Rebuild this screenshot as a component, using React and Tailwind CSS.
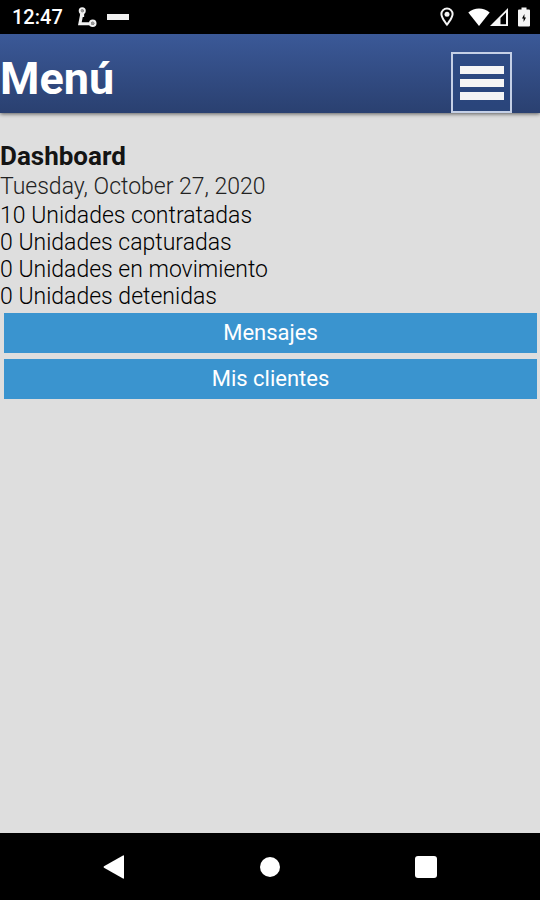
import React from "react";

const stats = [
  { count: 10, label: "Unidades contratadas" },
  { count: 0, label: "Unidades capturadas" },
  { count: 0, label: "Unidades en movimiento" },
  { count: 0, label: "Unidades detenidas" }
];

const actions = ["Mensajes", "Mis clientes"];

const RouteIcon = () => (
  <svg viewBox="0 0 20 21" className="w-5 h-5" fill="none" stroke="#f1f1f1" aria-hidden="true">
    <circle cx="5" cy="4" r="2.6" strokeWidth="2.2" />
    <circle cx="16" cy="17" r="2.8" strokeWidth="2.4" />
    <circle cx="5" cy="4" r="1.6" fill="#999" stroke="none" />
    <circle cx="16" cy="17" r="1.8" fill="#999" stroke="none" />
    <path d="M4.600 7L2.500 17.600H13M7 9H2.600" strokeWidth="3.2" />
  </svg>
);

const PinIcon = () => (
  <svg viewBox="0 0 14 20" className="w-3.5 h-5" aria-hidden="true">
    <path
      fill="#f5f5f5"
      fillRule="evenodd"
      d="M7 0.500a6.600 6.600 0 0 0-6.600 6.600c0 4.600 6.600 12.200 6.600 12.200S13.600 11.700 13.600 7.100A6.600 6.600 0 0 0 7 0.500zM7 2.500A4.600 4.600 0 0 1 11.600 7.100C11.600 9.600 8.800 13.600 7 16 5.200 13.600 2.400 9.600 2.400 7.100A4.600 4.600 0 0 1 7 2.500z"
    />
    <circle cx="7" cy="7.200" r="2.500" fill="#f5f5f5" />
  </svg>
);

const WifiIcon = () => (
  <svg viewBox="0 0 22 18" className="w-[22px] h-[18px]" fill="#fff" aria-hidden="true">
    <path d="M0.300 4.600C6.400-1 15.600-1 21.700 4.600L11 18z" />
  </svg>
);

const SignalIcon = () => (
  <svg viewBox="0 0 18 18" className="w-[18px] h-[18px]" aria-hidden="true">
    <path fill="#f5f5f5" fillRule="evenodd" d="M0 18L18 0V18zM10.500 16.200H16V4.600L10.500 10z" />
  </svg>
);

const BatteryIcon = () => (
  <svg viewBox="0 0 12 20" className="w-3 h-5" aria-hidden="true">
    <path fill="#f5f5f5" d="M3.500 0.500H8.500V2.500H11Q12 2.500 12 3.500V18.500Q12 19.500 11 19.500H1Q0 19.500 0 18.500V3.500Q0 2.500 1 2.500H3.500z" />
    <path fill="#000" d="M6.400 7L4 11.400H5.600V15L8 10.600H6.400z" />
  </svg>
);

const StatusBar = () => (
  <div className="flex h-[34px] items-center bg-black pl-3 pr-2.5 text-white">
    <span className="text-[20px] leading-6 font-medium">12:47</span>
    <span className="ml-3.5">
      <RouteIcon />
    </span>
    <span className="ml-2.5 h-1.5 w-[22px] bg-[#f1f1f1]" />
    <div className="ml-auto flex items-center">
      <PinIcon />
      <span className="ml-3.5">
        <WifiIcon />
      </span>
      <SignalIcon />
      <span className="ml-2.5">
        <BatteryIcon />
      </span>
    </div>
  </div>
);

const Header = () => (
  <header className="flex h-[79px] items-end justify-between bg-linear-to-b from-[#3b5998] to-[#2a4070] pr-7 shadow-[0_1px_4px_rgba(0,0,0,0.6)]">
    <h1 className="pb-1.5 text-[45px] leading-14 font-bold text-white">Menú</h1>
    <button
      type="button"
      aria-label="Abrir menú"
      className="flex size-[61px] flex-col items-center justify-center gap-[5px] border-2 border-[#c5d0e6] bg-[#294780]/60"
    >
      <span className="h-2 w-11 bg-[#f5f5f5]" />
      <span className="h-2 w-11 bg-[#f5f5f5]" />
      <span className="h-2 w-11 bg-[#f5f5f5]" />
    </button>
  </header>
);

const NavBar = () => (
  <nav className="grid h-[67px] grid-cols-3 place-items-center bg-black px-9">
    <button type="button" aria-label="Atrás">
      <svg viewBox="0 0 22 24" className="w-[22px] h-6" fill="#fff" aria-hidden="true">
        <path d="M1 11.200L20 0.500Q21 0 21 1V23Q21 24 20 23.500L1 12.800Q0 12 1 11.200z" />
      </svg>
    </button>
    <button type="button" aria-label="Inicio" className="size-5 rounded-full bg-white" />
    <button type="button" aria-label="Recientes" className="size-[22px] rounded-[3px] bg-white" />
  </nav>
);

export default function App() {
  return (
    <div className="flex min-h-screen flex-col bg-[#dedede] font-['Roboto',sans-serif]">
      <StatusBar />
      <Header />
      <main className="flex-1 pt-[27px] text-black">
        <h2 className="text-[26px] leading-8 font-bold text-[#141414]">Dashboard</h2>
        <p className="text-[23px] leading-[30px] font-light text-[#222]">Tuesday, October 27, 2020</p>
        <ul>
          {stats.map((stat) => (
            <li key={stat.label} className="text-[23px] leading-[27px] font-light">
              {stat.count} {stat.label}
            </li>
          ))}
        </ul>
        <div className="mt-[3px] flex flex-col gap-1.5 pl-1 pr-[3px]">
          {actions.map((action) => (
            <button key={action} type="button" className="h-10 bg-[#3a94cf] text-[22px] leading-7 text-white">
              {action}
            </button>
          ))}
        </div>
      </main>
      <NavBar />
    </div>
  );
}
